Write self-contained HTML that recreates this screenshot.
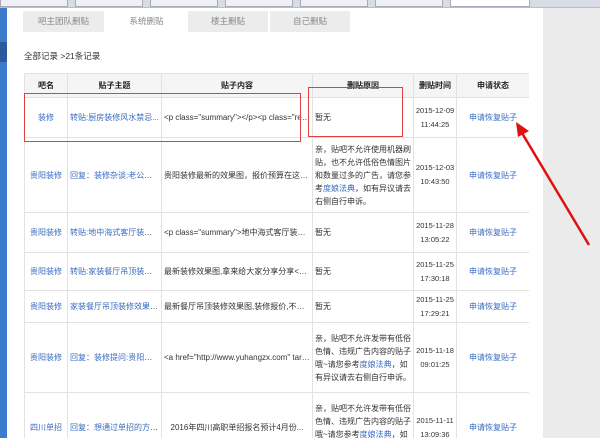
<!DOCTYPE html>
<html style="overflow:hidden;width:600px;height:438px"><head><meta charset="utf-8"><style>
*{margin:0;padding:0;box-sizing:border-box}
body{width:600px;height:438px;overflow:hidden;position:relative;background:#ebebeb;font-family:"Liberation Sans","Noto Sans CJK SC",sans-serif;font-size:9px;color:#333}
.abs{position:absolute}
.tabbar{left:0;top:0;width:600px;height:8px;background:#d8dde5;border-bottom:1px solid #b8bec8}
.btab{top:0;height:7px;background:#eef0f3;border:1px solid #aab;border-top:none}
.left{left:0;top:8px;width:7px;height:430px;background:#3c7bcc}
.main{left:7px;top:8px;width:536px;height:430px;background:#fff}
.tab{top:11px;height:21px;background:#ececec;color:#888;text-align:center;line-height:21px;font-size:8.5px}
.wrap{position:absolute;left:24px;top:73px;width:505px;height:365px;overflow:hidden}
table{width:505px;border-collapse:collapse;table-layout:fixed}
td,th{border:1px solid #e2e2e2;font-size:8px;overflow:hidden;white-space:nowrap;padding:0 2px;text-overflow:ellipsis}
th{background:#f5f5f5;height:24px;font-weight:bold;color:#222}
td.w{white-space:normal;line-height:13px}
td.d{padding:0;text-align:center;line-height:14px;font-size:7.5px}
a{color:#3a6bbf;text-decoration:none}
.c{text-align:center}
.red{border:1.5px solid #e04040}
</style></head><body>
<div class="abs tabbar"></div>
<div class="abs btab" style="left:0;width:68px"></div>
<div class="abs btab" style="left:75px;width:68px"></div>
<div class="abs btab" style="left:150px;width:68px"></div>
<div class="abs btab" style="left:225px;width:68px"></div>
<div class="abs btab" style="left:300px;width:68px"></div>
<div class="abs btab" style="left:375px;width:68px"></div>
<div class="abs btab" style="left:450px;width:80px;background:#fff"></div>
<div class="abs left"></div>
<div class="abs" style="left:0;top:42px;width:7px;height:20px;background:#2a5a9a"></div>
<div class="abs main"></div>
<div class="abs tab" style="left:23px;width:81px">吧主团队删贴</div>
<div class="abs tab" style="left:107px;width:79px;background:#fff">系统删贴</div>
<div class="abs tab" style="left:188px;width:80px">楼主删贴</div>
<div class="abs tab" style="left:270px;width:80px">自己删贴</div>
<div class="abs" style="left:24px;top:50px;font-size:8.5px">全部记录 &gt;21条记录</div>
<div class="wrap"><table>
<colgroup><col style="width:43px"><col style="width:94px"><col style="width:151px"><col style="width:101px"><col style="width:43px"><col style="width:73px"></colgroup>
<tr><th>吧名</th><th>贴子主题</th><th>贴子内容</th><th>删贴原因</th><th>删贴时间</th><th>申请状态</th></tr>
<tr style="height:40px"><td class="c"><a>装修</a></td><td><a>转贴:厨房装修风水禁忌...</a></td><td>&lt;p class="summary"&gt;&lt;/p&gt;&lt;p class="refe...</td><td>暂无</td><td class="d">2015-12-09<br>11:44:25</td><td class="c"><a>申请恢复贴子</a></td></tr>
<tr style="height:75px"><td class="c"><a>贵阳装修</a></td><td><a>回复：装修杂谈:老公打了...</a></td><td>贵阳装修最新的效果图，报价预算在这里...</td><td class="w">亲，贴吧不允许使用机器刷贴，也不允许低俗色情图片和数量过多的广告，请您参考<a>度娘法典</a>，如有异议请去右侧自行申诉。</td><td class="d">2015-12-03<br>10:43:50</td><td class="c"><a>申请恢复贴子</a></td></tr>
<tr style="height:40px"><td class="c"><a>贵阳装修</a></td><td><a>转贴:地中海式客厅装修效...</a></td><td>&lt;p class="summary"&gt;地中海式客厅装修...</td><td>暂无</td><td class="d">2015-11-28<br>13:05:22</td><td class="c"><a>申请恢复贴子</a></td></tr>
<tr style="height:38px"><td class="c"><a>贵阳装修</a></td><td><a>转贴:家装餐厅吊顶装修效...</a></td><td>最新装修效果图,拿来给大家分享分享&lt;p cl...</td><td>暂无</td><td class="d">2015-11-25<br>17:30:18</td><td class="c"><a>申请恢复贴子</a></td></tr>
<tr style="height:32px"><td class="c"><a>贵阳装修</a></td><td><a>家装餐厅吊顶装修效果图-...</a></td><td>最新餐厅吊顶装修效果图,装修报价,不容错...</td><td>暂无</td><td class="d">2015-11-25<br>17:29:21</td><td class="c"><a>申请恢复贴子</a></td></tr>
<tr style="height:70px"><td class="c"><a>贵阳装修</a></td><td><a>回复：装修提问:贵阳那几...</a></td><td>&lt;a href="http://www.yuhangzx.com" target...</td><td class="w">亲，贴吧不允许发带有低俗色情、违规广告内容的贴子哦~请您参考<a>度娘法典</a>，如有异议请去右侧自行申诉。</td><td class="d">2015-11-18<br>09:01:25</td><td class="c"><a>申请恢复贴子</a></td></tr>
<tr style="height:70px"><td class="c"><a>四川单招</a></td><td><a>回复：想通过单招的方式...</a></td><td class="c">2016年四川高职单招报名预计4月份...</td><td class="w">亲，贴吧不允许发带有低俗色情、违规广告内容的贴子哦~请您参考<a>度娘法典</a>，如有异议请去右侧自行申诉。</td><td class="d">2015-11-11<br>13:09:36</td><td class="c"><a>申请恢复贴子</a></td></tr>
</table></div>
<div class="abs red" style="left:24px;top:93px;width:277px;height:49px"></div>
<div class="abs red" style="left:308px;top:87px;width:95px;height:50px"></div>
<svg class="abs" style="left:0;top:0" width="600" height="438">
<line x1="589" y1="245" x2="522" y2="133" stroke="#e01010" stroke-width="2.5"/>
<polygon points="516,122 529,131 518,137" fill="#e01010"/>
</svg>
</body></html>
